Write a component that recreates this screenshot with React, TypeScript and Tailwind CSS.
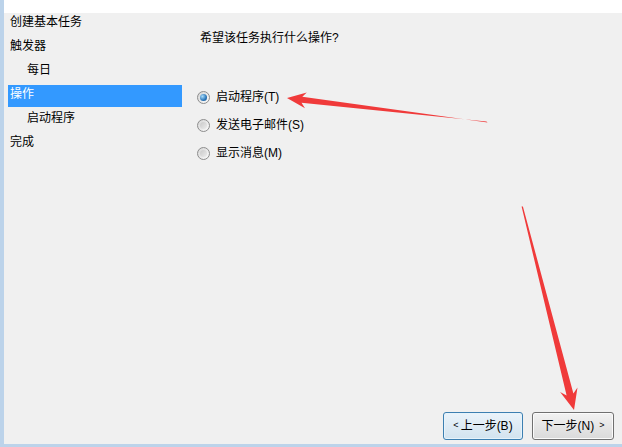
import React from 'react';

const font = { fontFamily: '"Liberation Sans", "Noto Sans CJK SC", sans-serif' };

const steps = [
  { label: '创建基本任务', indent: false },
  { label: '触发器', indent: false },
  { label: '每日', indent: true },
  { label: '操作', indent: false, active: true },
  { label: '启动程序', indent: true },
  { label: '完成', indent: false },
];

const options = [
  { label: '启动程序(T)', checked: true },
  { label: '发送电子邮件(S)', checked: false },
  { label: '显示消息(M)', checked: false },
];

const Radio: React.FC<{ checked: boolean }> = ({ checked }) => (
  <div className="w-[13px] h-[13px] rounded-full border border-[#8d8d8d] bg-gradient-to-br from-[#d6d6d6] to-[#fbfbfb] flex items-center justify-center shrink-0">
    {checked ? (
      <div className="w-[7px] h-[7px] rounded-full bg-[radial-gradient(circle_at_35%_35%,#a8dcfa,#2a75b8_60%,#104d86)]" />
    ) : (
      <div className="w-[7px] h-[7px] rounded-full bg-gradient-to-br from-[#c9c9c9] to-[#ececec]" />
    )}
  </div>
);

export default function App() {
  return (
    <div
      className="relative w-[622px] h-[447px] overflow-hidden bg-[#f0f0f0] border-l-4 border-b-[3px] border-[#bcd3ea] flex flex-col text-[12px] text-black"
      style={font}
    >
      <div className="h-[13px] bg-white shrink-0" />

      <div className="flex flex-1 min-h-0">
        {/* left step list */}
        <div className="w-[178px] pl-[4px] shrink-0">
          {steps.map((s) => (
            <div key={s.label} className="h-[24px]">
              <div
                className={`h-[22px] pt-[1px] leading-[16px] ${s.indent ? 'pl-[19px]' : 'pl-[2px]'} ${
                  s.active ? 'bg-[#3399ff] text-white' : ''
                }`}
              >
                {s.label}
              </div>
            </div>
          ))}
        </div>

        {/* main panel */}
        <div className="flex-1 flex flex-col">
          <div className="pl-[18px] pt-[17px] leading-[16px]">希望该任务执行什么操作?</div>
          <div className="mt-[37px] pl-[15px] flex flex-col">
            {options.map((o) => (
              <div key={o.label} className="h-[28px] flex items-center gap-[6px]">
                <Radio checked={o.checked} />
                <span className="leading-[16px]">{o.label}</span>
              </div>
            ))}
          </div>
        </div>
      </div>

      {/* footer buttons */}
      <div className="flex justify-end gap-[9px] pr-[8px] pb-[4px] shrink-0">
        <button className="w-[80px] h-[28px] rounded-[3px] border border-[#3c7fb1] bg-gradient-to-b from-[#eaf3fa] to-[#d2e3ef] shadow-[inset_0_0_0_1px_#e6f3fb] flex items-center justify-center">
          <span className="text-[9px] mr-[2px]">&lt;</span>上一步(B)
        </button>
        <button className="w-[82px] h-[28px] rounded-[3px] border border-[#707070] bg-gradient-to-b from-[#f2f2f2] to-[#dadada] shadow-[inset_0_0_0_1px_#fbfbfb] flex items-center justify-center">
          下一步(N)<span className="text-[9px] ml-[5px]">&gt;</span>
        </button>
      </div>

      {/* red annotation arrows */}
      <svg className="absolute -left-1 top-0 pointer-events-none" width="622" height="447" viewBox="0 0 622 447">
        <polygon
          fill="#f03a3a"
          points="487.6,122.6 302.3,96.8 306.8,92.4 287,98 305,108.2 301.5,102.8 486.4,121.4"
        />
        <polygon
          fill="#f03a3a"
          points="521.6,206.6 566.6,395.4 560.1,391.9 574,410 577.5,387.5 573.4,393.6 522.9,206.4"
        />
      </svg>
    </div>
  );
}
